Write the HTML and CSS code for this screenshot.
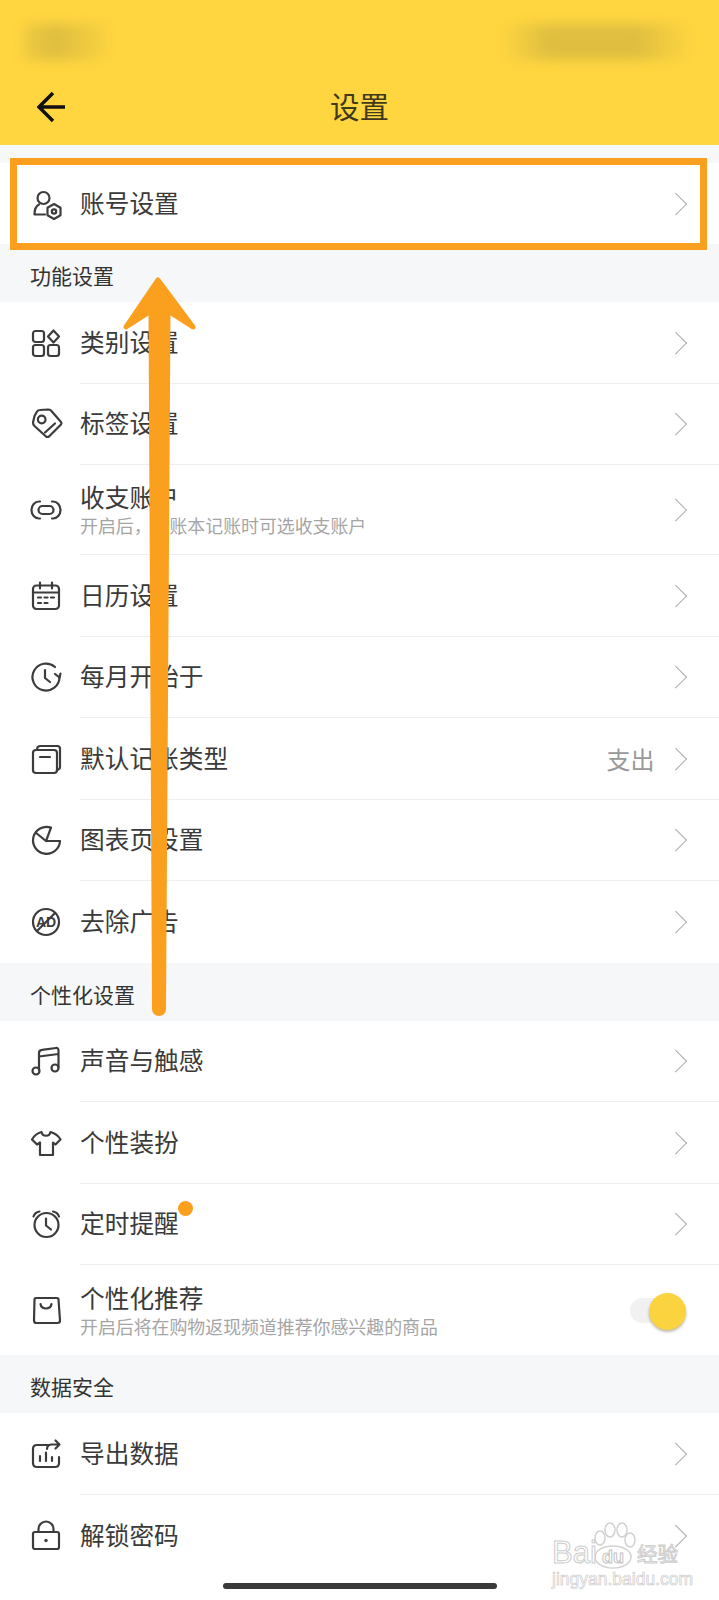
FILE: index.html
```html
<!DOCTYPE html>
<html lang="zh-CN">
<head>
    <meta charset="UTF-8">
    <meta name="viewport" content="width=device-width, initial-scale=1.0">
    <title>设置</title>
    <link rel="stylesheet" href="styles.css">
</head>
<body>
    <div class="page">
        <header class="topbar">
            <div class="statusbar">
                <span class="blur blur-left"></span>
                <span class="blur blur-right"></span>
            </div>
            <div class="navbar">
                <svg class="back" viewBox="0 0 30 38"><path d="M28 19H3M16 5L2 19l14 14"/></svg>
                <h1 class="title">设置</h1>
            </div>
        </header>

        <div class="gap"></div>
        <div class="row row-first">
            <svg class="icon" viewBox="0 0 30 30"><circle cx="12.500" cy="9" r="6"/><path d="M8 15.500C5 17 3.500 20.500 3.500 25.500H14"/><path d="M23 15l6.500 3.700v7.600L23 30l-6.500-3.700v-7.600z"/><circle cx="23" cy="22.500" r="2.200"/></svg>
            <div class="row-body"><span class="label">账号设置</span><span class="chevron"></span></div>
        </div>

        <div class="section">功能设置</div>
        <div class="row">
            <svg class="icon" viewBox="0 0 30 30"><rect x="2" y="3" width="11" height="11" rx="2.500"/><rect x="2" y="17" width="11" height="11" rx="2.500"/><rect x="17" y="17" width="11" height="11" rx="2.500"/><path d="M22.500 2.500l5.500 6-5.500 6-5.500-6z"/></svg>
            <div class="row-body"><span class="label">类别设置</span><span class="chevron"></span></div>
        </div>
        <div class="row">
            <svg class="icon" viewBox="0 0 30 30"><path d="M3.500 7L6 2.500Q7 1 9 1l8-.5q2 0 3 1l10 11.500q1 1 0 2.500L18 27.500q-1.500 1-3 0L3.500 17Q2 15.500 2 13.500z"/><circle cx="10.700" cy="10.500" r="3.800"/><path d="M24 14.500l-10 9"/></svg>
            <div class="row-body"><span class="label">标签设置</span><span class="chevron"></span></div>
        </div>
        <div class="row row-tall">
            <svg class="icon" viewBox="0 0 30 30"><path d="M9 6.500H8A7.500 8.500 0 0 0 8 23.500h1M21 6.500h1a7.500 8.500 0 0 1 0 17h-1"/><rect x="7.500" y="11" width="15" height="8" rx="4"/></svg>
            <div class="row-body">
                <div class="label-group">
                    <span class="label">收支账户</span>
                    <span class="sublabel">开启后，该账本记账时可选收支账户</span>
                </div>
                <span class="chevron"></span>
            </div>
        </div>
        <div class="row">
            <svg class="icon" viewBox="0 0 30 30"><rect x="2" y="4.500" width="26" height="23.500" rx="3.500"/><path d="M2 11.500h26M9 1.500v6M21 1.500v6M7 16.500h3M13.500 16.500h3M20 16.500h3M7 22h3M13.500 22h3"/></svg>
            <div class="row-body"><span class="label">日历设置</span><span class="chevron"></span></div>
        </div>
        <div class="row">
            <svg class="icon" viewBox="0 0 30 30"><path d="M28.500 15A13.500 13.500 0 1 1 24 5"/><path d="M14 8v8l5 4M24 12l4.500 3.500 1-4"/></svg>
            <div class="row-body"><span class="label">每月开始于</span><span class="chevron"></span></div>
        </div>
        <div class="row">
            <svg class="icon" viewBox="0 0 30 30"><rect x="2" y="6" width="24" height="23" rx="3"/><path d="M6 6c0-2.500 1-4 3.500-4h17C28 2 29 3 29 5v18c0 1.500-1 2.500-3 3M9 13h10"/></svg>
            <div class="row-body"><span class="label">默认记账类型</span><span class="value">支出</span><span class="chevron"></span></div>
        </div>
        <div class="row">
            <svg class="icon" viewBox="0 0 30 30"><path d="M20 2.600A13.500 13.500 0 1 0 29 16H15L4.500 7.500M15 16l5-13.400"/></svg>
            <div class="row-body"><span class="label">图表页设置</span><span class="chevron"></span></div>
        </div>
        <div class="row">
            <svg class="icon" viewBox="0 0 30 30"><circle cx="15" cy="15" r="13"/><path d="M24 6L6 24"/><text class="icon-text" x="15" y="20">AD</text></svg>
            <div class="row-body row-body-last"><span class="label">去除广告</span><span class="chevron"></span></div>
        </div>

        <div class="section">个性化设置</div>
        <div class="row">
            <svg class="icon" viewBox="0 0 30 30"><path d="M8 24V7c0-2 1-3 3-3.200L25 2c1.500-.2 2.500 1 2.500 2.500V21M8 10.500l19.500-2.500"/><circle cx="5" cy="25" r="3.500"/><circle cx="24" cy="22" r="3.500"/></svg>
            <div class="row-body"><span class="label">声音与触感</span><span class="chevron"></span></div>
        </div>
        <div class="row">
            <svg class="icon" viewBox="0 0 30 30"><path d="M10.500 4C7 5 3.500 7 1 11.500l5 5 3-2V27h13V14.500l2.500 2 5-5C27 7 23 5 19.500 4c-1 5-8 5-9 0z"/></svg>
            <div class="row-body"><span class="label">个性装扮</span><span class="chevron"></span></div>
        </div>
        <div class="row">
            <svg class="icon" viewBox="0 0 30 30"><circle cx="15.500" cy="16" r="12"/><path d="M15 9.500v7l5 4M2.500 7.500c1-3 3-4.500 6-5M28 7.500c-1-3-3-4.500-6-5"/></svg>
            <div class="row-body"><span class="label">定时提醒</span><span class="chevron"></span></div>
        </div>
        <div class="row row-tall">
            <svg class="icon" viewBox="0 0 30 30"><path d="M5 3h21q1.500 0 1.500 1.500L29 25.500q0 2.500-2.500 2.500h-21Q3 28 3 25.500L3.500 4.500Q3.500 3 5 3z"/><path d="M9.500 9c1 6 10 6 11 0"/></svg>
            <div class="row-body row-body-last">
                <div class="label-group">
                    <span class="label">个性化推荐</span>
                    <span class="sublabel">开启后将在购物返现频道推荐你感兴趣的商品</span>
                </div>
                <span class="toggle"><span class="knob"></span></span>
            </div>
        </div>

        <div class="section">数据安全</div>
        <div class="row">
            <svg class="icon" viewBox="0 0 30 30"><path d="M17 6H6C3.500 6 2 7.500 2 10v14c0 2.500 1.500 4 4 4h18c2.500 0 4-1.500 4-4v-6"/><path d="M16 10c0-3 2-4.500 5-4.500h7M24.500 1.500l4 4-4 4M9 17v5M15 13.500V22M21 18v4"/></svg>
            <div class="row-body"><span class="label">导出数据</span><span class="chevron"></span></div>
        </div>
        <div class="row">
            <svg class="icon" viewBox="0 0 30 30"><rect x="2" y="12" width="26" height="17" rx="2"/><path d="M7.500 12V9a7.500 7.500 0 0 1 15 0v3"/><circle class="icon-dot" cx="15" cy="20.500" r="1.700"/></svg>
            <div class="row-body row-body-last"><span class="label">解锁密码</span><span class="chevron"></span></div>
        </div>

        <div class="home-bar"></div>

        <!-- annotation drawn over the screenshot -->
        <div class="highlight"></div>
        <svg class="arrow" viewBox="0 0 719 1600"><path d="M158 280L193 327 168 311 163.500 1009A4.500 4.500 0 0 1 154.500 1009L151 311 126 327z"/></svg>
        <span class="dot"></span>

        <div class="watermark">
            <svg class="paw" viewBox="0 0 50 50">
                <ellipse cx="9" cy="16" rx="5" ry="7"/>
                <ellipse cx="19" cy="8" rx="5" ry="7"/>
                <ellipse cx="31" cy="8" rx="5" ry="7"/>
                <ellipse cx="39" cy="18" rx="5" ry="7"/>
                <ellipse cx="22" cy="35" rx="18" ry="11"/>
                <text class="paw-text" x="22" y="41">du</text>
            </svg>
            <span class="wm-bai">Bai</span>
            <span class="wm-cn">经验</span>
            <span class="wm-url">jingyan.baidu.com</span>
        </div>
    </div>
</body>
</html>
```

FILE: styles.css
```css
* {
    box-sizing: border-box;
}
body {
    margin: 0;
    background-color: #fff;
    font-family: "Noto Sans CJK SC", "Liberation Sans", sans-serif;
    color: #3a3a3a;
}
.page {
    position: relative;
    width: 719px;
    height: 1600px;
    overflow: hidden;
    background-color: #fff;
}
.topbar {
    height: 145px;
    background-color: #ffd640;
}
.statusbar {
    display: flex;
    justify-content: space-between;
    height: 85px;
    padding: 24px 26px 0 24px;
}
.blur {
    display: block;
    height: 36px;
    filter: blur(6px);
}
.blur-left {
    width: 90px;
    background: linear-gradient(90deg, rgba(222, 190, 64, 0.5), #dfbe40 35%, rgba(222, 190, 64, 0.5) 70%, rgba(222, 190, 64, 0));
}
.blur-right {
    width: 192px;
    background: linear-gradient(90deg, rgba(222, 190, 64, 0), #dfbe40 25%, #dfbe40 70%, rgba(222, 190, 64, 0));
}
.navbar {
    position: relative;
    display: flex;
    align-items: center;
    justify-content: center;
    height: 44px;
}
.back {
    position: absolute;
    left: 37px;
    top: 3px;
    width: 30px;
    height: 38px;
    fill: none;
    stroke: #111;
    stroke-width: 3.400;
}
.title {
    margin: 0 0 4px 0;
    font-size: 29.500px;
    font-weight: 400;
    color: #40391c;
}
.gap {
    height: 18px;
    background-color: #f6f7f8;
}
.section {
    display: flex;
    align-items: center;
    height: 58px;
    padding-left: 30px;
    padding-top: 4px;
    font-size: 21px;
    color: #333;
    background-color: #f6f7f8;
}
.row {
    display: flex;
    align-items: center;
    height: 81.500px;
    padding-left: 31px;
    background-color: #fff;
}
.row-first {
    height: 81px;
}
.row-tall {
    height: 90px;
}
.row-body {
    display: flex;
    flex: 1;
    align-items: center;
    height: 100%;
    margin-left: 19px;
    padding-right: 32px;
    border-bottom: 1px solid #efefef;
}
.row-first .row-body,
.row-body-last {
    border-bottom: none;
}
.icon {
    flex: none;
    width: 30px;
    height: 30px;
    fill: none;
    stroke: #3c3c3c;
    stroke-width: 2.200;
    stroke-linejoin: round;
    stroke-linecap: round;
    overflow: visible;
}
.icon-text {
    fill: #3c3c3c;
    stroke: none;
    font-family: "Liberation Sans", sans-serif;
    font-size: 14px;
    font-weight: 700;
    text-anchor: middle;
}
.icon-dot {
    fill: #3c3c3c;
    stroke: none;
}
.label-group {
    display: flex;
    flex-direction: column;
}
.label {
    font-size: 24.700px;
    line-height: 32px;
}
.row-body > .label {
    margin-bottom: 3px;
}
.sublabel {
    margin-top: 1px;
    font-size: 17.900px;
    line-height: 24px;
    color: #a5a5a5;
}
.row-tall .label-group {
    margin-top: -2px;
}
.value {
    margin-left: auto;
    margin-right: 13px;
    font-size: 24px;
    color: #999;
}
.chevron {
    flex: none;
    width: 15.500px;
    height: 15.500px;
    margin-left: auto;
    margin-right: 4px;
    border-top: 1.500px solid #aaa;
    border-right: 1.500px solid #aaa;
    transform: rotate(45deg);
}
.value + .chevron {
    margin-left: 0;
}
.toggle {
    position: relative;
    flex: none;
    width: 44px;
    height: 25px;
    margin-left: auto;
    margin-right: 13px;
    border-radius: 13px;
    background-color: #f1f1f1;
}
.knob {
    position: absolute;
    right: -12px;
    top: -5px;
    width: 37px;
    height: 37px;
    border-radius: 50%;
    background-color: #fbd33f;
    box-shadow: 0 2px 3px rgba(90, 80, 30, 0.4);
}
.home-bar {
    position: absolute;
    left: 223px;
    bottom: 11px;
    width: 274px;
    height: 6px;
    border-radius: 3px;
    background-color: #3a3a3a;
}
.highlight {
    position: absolute;
    left: 10px;
    top: 158px;
    width: 697px;
    height: 92px;
    border: 7px solid #fa9f1e;
}
.arrow {
    position: absolute;
    left: 0;
    top: 0;
    width: 719px;
    height: 1600px;
    fill: #fa9f1e;
    stroke: #fa9f1e;
    stroke-width: 5;
    stroke-linejoin: round;
}
.dot {
    position: absolute;
    left: 178px;
    top: 1201px;
    width: 15px;
    height: 15px;
    border-radius: 50%;
    background-color: #fa9f1e;
}
.watermark {
    position: absolute;
    left: 551px;
    top: 1520px;
    width: 135px;
    height: 66px;
}
.paw {
    position: absolute;
    left: 40px;
    top: 2px;
    width: 50px;
    height: 50px;
    fill: #fff;
    fill-opacity: 0.6;
    stroke: #d2d2d2;
    stroke-width: 1.500;
}
.paw-text {
    fill: #fff;
    stroke: #c4c4c4;
    stroke-width: 1;
    font-family: "Liberation Sans", sans-serif;
    font-size: 18px;
    font-weight: 700;
    text-anchor: middle;
}
.wm-bai,
.wm-cn,
.wm-url {
    position: absolute;
    color: #fff;
    -webkit-text-stroke: 1px #cdcdcd;
    white-space: nowrap;
}
.wm-bai {
    left: 1px;
    top: 18px;
    font-family: "Liberation Sans", sans-serif;
    font-size: 31px;
    line-height: 30px;
}
.wm-cn {
    left: 86px;
    top: 19px;
    font-size: 20.500px;
    line-height: 28px;
}
.wm-url {
    left: 1px;
    top: 49px;
    font-family: "Liberation Sans", sans-serif;
    font-size: 17.500px;
    line-height: 20px;
    -webkit-text-stroke: 0.700px #cdcdcd;
}
```
